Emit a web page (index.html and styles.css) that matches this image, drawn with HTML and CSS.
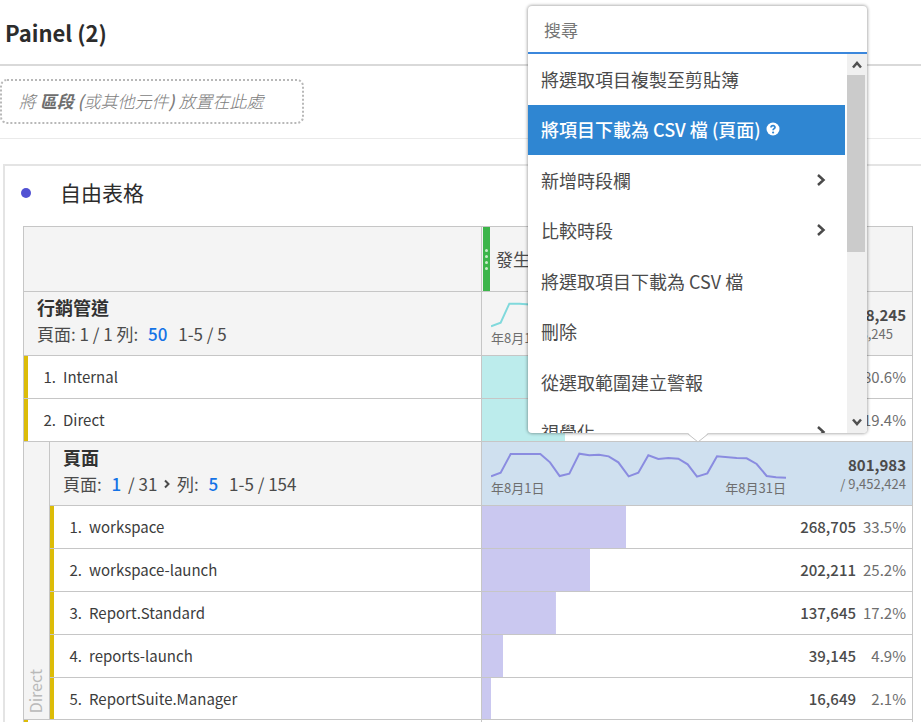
FILE: index.html
```html
<!DOCTYPE html>
<html lang="zh-Hant">
<head>
<meta charset="utf-8">
<title>Painel (2)</title>
<link rel="stylesheet" href="styles.css">
</head>
<body>
<header class="panel-header"><h1>Painel (2)</h1></header>
<section class="segments">
  <div class="dropzone">將 <b>區段</b> <span class="paren">(</span>或其他元件<span class="paren">)</span> 放置在此處</div>
</section>
<main class="card">
  <div class="card-title"><span class="dot"></span><h2>自由表格</h2></div>
  <table class="freeform">
    <colgroup><col class="col-side"><col><col class="col-value"></colgroup>
    <thead>
      <tr class="row-head">
        <th colspan="2"></th>
        <th class="metric">
          <div class="metric-inner">
            <span class="handle"><i></i><i></i><i></i><i></i></span>
            <span>發生次數</span>
          </div>
        </th>
      </tr>
    </thead>
    <tbody>
      <tr class="row-dim">
        <th colspan="2">
          <div class="dim">
            <strong>行銷管道</strong>
            <p>頁面: 1 / 1 列: <a href="#rows">50</a> <span class="range">1-5 / 5</span></p>
          </div>
        </th>
        <td class="summary">
          <div class="summary-inner">
            <div class="trend">
              <svg class="spark cyan" viewBox="0 0 885 81"><polyline points="0,73 29,62 55,5 85,5 148,10 177,34 206,73 235,64 265,6 353,10 383,34 413,73"/></svg>
              <div class="dates"><span>年8月1日</span><span>年8月31日</span></div>
            </div>
            <div class="totals"><b>4,138,245</b><span class="inset">4,138,245</span></div>
          </div>
        </td>
      </tr>
      <tr class="row-item">
        <th colspan="2" class="marked"><div class="item"><span class="ord">1.</span><span>Internal</span></div></th>
        <td class="bar cyan-bar" style="--bar: 80.6%"><span class="pct">80.6%</span></td>
      </tr>
      <tr class="row-item">
        <th colspan="2" class="marked"><div class="item"><span class="ord">2.</span><span>Direct</span></div></th>
        <td class="bar cyan-bar" style="--bar: 19.4%"><span class="pct">19.4%</span></td>
      </tr>
      <tr class="row-dim">
        <th rowspan="6" class="side"><span>Direct</span></th>
        <th>
          <div class="dim">
            <strong>頁面</strong>
            <p>頁面: <a href="#page">1</a> / 31 <button class="next" type="button" aria-label="下一頁"><svg viewBox="0 0 8 10"><path d="M2 1.500 5.500 5 2 8.500"/></svg></button> 列: <a href="#rows">5</a> <span class="range">1-5 / 154</span></p>
          </div>
        </th>
        <td class="summary selected">
          <div class="summary-inner">
            <div class="trend">
              <svg class="spark purple" viewBox="0 0 885 81"><polyline points="0,73 29,62 59,6 148,6 177,31 206,72 235,65 265,5 295,10 324,8 353,13 382,31 413,73 442,62 472,10 502,21 532,18 562,20 590,37 618,74 649,64 678,13 737,18 767,19 797,36 827,72 855,76 885,77"/></svg>
              <div class="dates"><span>年8月1日</span><span>年8月31日</span></div>
            </div>
            <div class="totals"><b>801,983</b><span>/ 9,452,424</span></div>
          </div>
        </td>
      </tr>
      <tr class="row-item">
        <th class="marked"><div class="item"><span class="ord">1.</span><span>workspace</span></div></th>
        <td class="bar" style="--bar: 33.5%">268,705<span class="pct">33.5%</span></td>
      </tr>
      <tr class="row-item">
        <th class="marked"><div class="item"><span class="ord">2.</span><span>workspace-launch</span></div></th>
        <td class="bar" style="--bar: 25.2%">202,211<span class="pct">25.2%</span></td>
      </tr>
      <tr class="row-item">
        <th class="marked"><div class="item"><span class="ord">3.</span><span>Report.Standard</span></div></th>
        <td class="bar" style="--bar: 17.2%">137,645<span class="pct">17.2%</span></td>
      </tr>
      <tr class="row-item">
        <th class="marked"><div class="item"><span class="ord">4.</span><span>reports-launch</span></div></th>
        <td class="bar" style="--bar: 4.9%">39,145<span class="pct">4.9%</span></td>
      </tr>
      <tr class="row-item last">
        <th class="marked"><div class="item"><span class="ord">5.</span><span>ReportSuite.Manager</span></div></th>
        <td class="bar" style="--bar: 2.1%">16,649<span class="pct">2.1%</span></td>
      </tr>
      <tr class="row-stub"><th colspan="2" class="marked"></th><td></td></tr>
    </tbody>
  </table>
</main>

<div class="popover">
  <input class="search" type="text" placeholder="搜尋" aria-label="搜尋">
  <div class="popover-body">
    <ul class="menu">
      <li><button type="button">將選取項目複製至剪貼簿</button></li>
      <li><button type="button" class="active">將項目下載為 CSV 檔 (頁面)
        <svg class="help" viewBox="0 0 14 14"><circle cx="7" cy="7" r="6.500" fill="#fff"/><path d="M5 5.600C5 3 9.200 3.100 9 5.400 8.900 6.700 7.100 6.700 7.100 8.300" fill="none" stroke="#2f86d2" stroke-width="1.700"/><circle cx="7.100" cy="10.500" r="1.100" fill="#2f86d2"/></svg></button></li>
      <li><button type="button">新增時段欄<svg class="chev" viewBox="0 0 10 14"><path d="M2 2 7.500 7 2 12"/></svg></button></li>
      <li><button type="button">比較時段<svg class="chev" viewBox="0 0 10 14"><path d="M2 2 7.500 7 2 12"/></svg></button></li>
      <li><button type="button">將選取項目下載為 CSV 檔</button></li>
      <li><button type="button">刪除</button></li>
      <li><button type="button">從選取範圍建立警報</button></li>
      <li><button type="button">視覺化<svg class="chev" viewBox="0 0 10 14"><path d="M2 2 7.500 7 2 12"/></svg></button></li>
    </ul>
    <div class="scrollbar" aria-hidden="true">
      <svg viewBox="0 0 20 20"><path d="M6 13 10 8.500 14 13"/></svg>
      <div class="thumb"></div>
      <svg viewBox="0 0 20 20"><path d="M6 7 10 11.500 14 7"/></svg>
    </div>
  </div>
  <svg class="tip" viewBox="0 0 20 10"><path class="tip-fill" d="M0 0H20L10 9Z"/><path class="tip-line" d="M0 1 10 9 20 1"/></svg>
</div>
</body>
</html>
```

FILE: styles.css
```css
* { box-sizing: border-box; }

html { overflow: hidden; }

body {
  margin: 0;
  position: relative;
  background: #fff;
  color: #4b4b4b;
  font: 15px/20px "Noto Sans CJK TC", "Noto Sans", sans-serif;
}

h1, h2, p { margin: 0; }
a { color: #1473e6; text-decoration: none; font-weight: 500; margin: 0 3px 0 6px; }
button, input { font: inherit; color: inherit; border: 0; background: none; padding: 0; }

.panel-header {
  height: 66px;
  display: flex;
  align-items: center;
  padding-left: 5px;
  border-bottom: 2px solid #d9d9d9;
}
.panel-header h1 { font-size: 22px; line-height: 30px; font-weight: 700; color: #2c2c2c; }

.segments { padding: 13px 0 14px; border-bottom: 1px solid #eaeaea; }
.dropzone {
  width: 304px;
  height: 45px;
  padding-left: 17px;
  border: 2px dotted #b8b8b8;
  border-radius: 7px;
  font-size: 17px;
  line-height: 40px;
  font-style: italic;
  font-weight: 300;
  color: #7d7d7d;
  white-space: nowrap;
}
.dropzone b { font-weight: 700; color: #6e6e6e; }
.paren { font-weight: 500; }

.card {
  margin: 25px 0 0 3px;
  padding: 0 8px 0 18px;
  border: solid #e4e4e4;
  border-width: 2px 0 0 2px;
}
.card-title { height: 60px; display: flex; align-items: center; padding-bottom: 6px; }
.dot { width: 10px; height: 10px; border-radius: 50%; background: #5151d3; margin: 0 29px 0 -2px; }
.card-title h2 { font-size: 21px; line-height: 30px; padding-bottom: 2px; font-weight: 400; color: #2c2c2c; }

.freeform {
  width: 100%;
  table-layout: fixed;
  border-collapse: separate;
  border-spacing: 0;
  border: solid #c6c6c6;
  border-width: 1px 1px 0 0;
}
.col-side { width: 26px; }
.col-value { width: 431px; }
.freeform th, .freeform td {
  padding: 0;
  border: solid #c6c6c6;
  border-width: 0 0 1px 1px;
  text-align: left;
  font-weight: 400;
}
.row-head { height: 65px; background: #f4f4f4; }
.row-dim { height: 64px; background: #f4f4f4; }
.row-item { height: 43px; }
.row-item.last { height: 42px; }
.row-stub { height: 6px; }

.metric-inner { display: flex; align-items: center; gap: 6px; height: 64px; font-size: 17px; }
.handle {
  align-self: stretch;
  width: 7px;
  margin-left: 1px;
  display: flex;
  flex-direction: column;
  align-items: center;
  justify-content: center;
  gap: 3px;
  background: #3cb54a;
}
.handle i { width: 3px; height: 3px; border-radius: 50%; background: #c9ecc9; }

.dim { padding: 0 0 4px 13px; white-space: nowrap; }
.dim strong { display: block; font-size: 18px; line-height: 24px; font-weight: 700; color: #323232; }
.dim p { font-size: 17px; line-height: 30px; }
.range { margin-left: 4px; }
.next svg { width: 8px; height: 10px; margin: 0 2px; fill: none; stroke: #4b4b4b; stroke-width: 2; vertical-align: 2px; }

.freeform .marked {
  background: linear-gradient(#dcbc08, #dcbc08) no-repeat 0 0 / 4px 100%;
  color: #3c3c3c;
}
.item { display: flex; gap: 7px; padding-left: 1px; }
.ord { width: 31px; text-align: right; }

.freeform .side { vertical-align: bottom; color: #b9b9b9; font-size: 16px; }
.side span { display: block; writing-mode: vertical-rl; transform: rotate(180deg); line-height: 22px; padding-top: 6px; }

.freeform .bar {
  --tone: #cac8f0;
  background: linear-gradient(var(--tone), var(--tone)) no-repeat 0 0 / var(--bar) 100%;
  text-align: right;
  padding-right: 6px;
  font-weight: 500;
}
.freeform .cyan-bar { --tone: #bcecec; }
.pct { display: inline-block; min-width: 50px; font-weight: 400; color: #6e6e6e; }

.freeform .selected { background: #cfe0ef; }
.summary-inner { display: flex; justify-content: space-between; align-items: center; padding: 0 6px 0 9px; }
.trend { width: 295px; padding-top: 2px; }
.spark { display: block; width: 295px; height: 27px; fill: none; stroke-width: 6; }
.cyan { stroke: #80d9dc; }
.purple { stroke: #8a8ce0; }
.dates { display: flex; justify-content: space-between; font-size: 13px; line-height: 18px; color: #6e6e6e; }
.totals { display: flex; flex-direction: column; align-items: flex-end; }
.totals b { line-height: 20px; color: #4b4b4b; }
.totals span { font-size: 13px; line-height: 18px; color: #6e6e6e; }
.totals .inset { margin-right: 13px; }

.popover {
  position: absolute;
  top: 6px;
  left: 528px;
  width: 339px;
  background: #fff;
  border-radius: 4px;
  box-shadow: 0 0 3px 1px rgba(0, 0, 0, 0.3);
}
.search {
  display: block;
  width: 100%;
  height: 48px;
  padding: 0 16px;
  border-bottom: 2px solid #3b87dc;
  font-size: 17px;
  outline: none;
}
.search::placeholder { color: #757575; opacity: 1; }
.popover-body { display: flex; height: 379px; overflow: hidden; border-radius: 0 0 4px 4px; }
.menu { flex: 1; margin: 0; padding: 0; list-style: none; }
.menu li { height: 50px; }
.menu li:nth-child(odd) { height: 51px; }
.menu button {
  width: 100%;
  height: 100%;
  padding: 0 19px 2px 13px;
  display: flex;
  align-items: center;
  font-size: 18px;
  text-align: left;
  white-space: nowrap;
}
.menu .active { background: #2f86d2; color: #fff; font-weight: 500; }
.help { width: 14px; height: 14px; margin-left: 5px; }
.chev { width: 10px; height: 14px; margin-left: auto; fill: none; stroke: #4b4b4b; stroke-width: 2.5; }
.scrollbar { width: 20px; margin-left: 2px; background: #f0f0f0; display: flex; flex-direction: column; }
.scrollbar svg { width: 20px; height: 21px; fill: none; stroke: #505050; stroke-width: 2.5; }
.scrollbar .thumb { height: 177px; margin-right: 2px; background: #cbcbcb; }
.scrollbar svg:last-child { margin-top: auto; }
.tip { position: absolute; top: 100%; left: 50%; width: 20px; height: 10px; margin-left: -10px; overflow: visible; }
.tip-fill { fill: #fff; }
.tip-line { fill: none; stroke: #c4c4c4; }
```
